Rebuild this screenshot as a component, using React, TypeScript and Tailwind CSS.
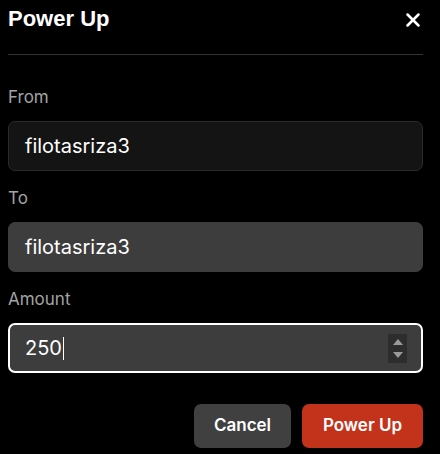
import { X } from "lucide-react";

const font = { fontFamily: "Inter, 'Noto Sans', sans-serif" };

function Field({
  label,
  children,
  className,
}: {
  label: string;
  children: React.ReactNode;
  className: string;
}) {
  return (
    <div className="flex flex-col">
      <label className="text-[17px] leading-6 text-[#a3a3a3]">{label}</label>
      <div
        className={
          "mt-3 flex h-[50px] items-center rounded-[7px] text-[20px] text-white " +
          className
        }
      >
        {children}
      </div>
    </div>
  );
}

export default function App() {
  return (
    <div className="min-h-[454px] w-[440px] bg-black pl-2 pr-[17px]" style={font}>
      {/* Header */}
      <div className="flex items-start justify-between border-b border-[#333333] pt-[5px] pb-[21px]">
        <h2
          className="text-[22px] font-bold leading-7 text-white"
          style={{ fontFamily: "'Liberation Sans', Arial, sans-serif" }}
        >
          Power Up
        </h2>
        <button className="mt-[4px] mr-[-1px] text-white">
          <X size={22} strokeWidth={2.8} />
        </button>
      </div>

      <div className="flex flex-col gap-[15px] pt-[30px]">
        <Field label="From" className="border border-[#2a2a2a] bg-[#141414] px-4">
          filotasriza3
        </Field>
        <Field label="To" className="border border-[#3d3d3d] bg-[#3d3d3d] px-4">
          filotasriza3
        </Field>
        <Field label="Amount" className="border-2 border-white bg-[#3d3d3d] pl-[15px] pr-[14px]">
          <span className="flex items-center">
            250
            <span className="ml-px h-[23px] w-px bg-white" />
          </span>
          <span className="ml-auto flex h-[29px] w-[19px] flex-col items-center justify-center gap-[7px] bg-[#2d2d2d]">
            <span className="h-0 w-0 border-x-[5px] border-b-[6px] border-x-transparent border-b-[#9a9a9a]" />
            <span className="h-0 w-0 border-x-[5px] border-t-[6px] border-x-transparent border-t-[#9a9a9a]" />
          </span>
        </Field>
      </div>

      {/* Actions */}
      <div className="mt-[31px] flex justify-end gap-[11px]">
        <button className="h-[44px] w-[97px] rounded-[7px] bg-[#404040] text-[17px] font-semibold text-white">
          Cancel
        </button>
        <button className="h-[44px] w-[121px] rounded-[7px] bg-[#c3321b] text-[17px] font-semibold text-white">
          Power Up
        </button>
      </div>
    </div>
  );
}
